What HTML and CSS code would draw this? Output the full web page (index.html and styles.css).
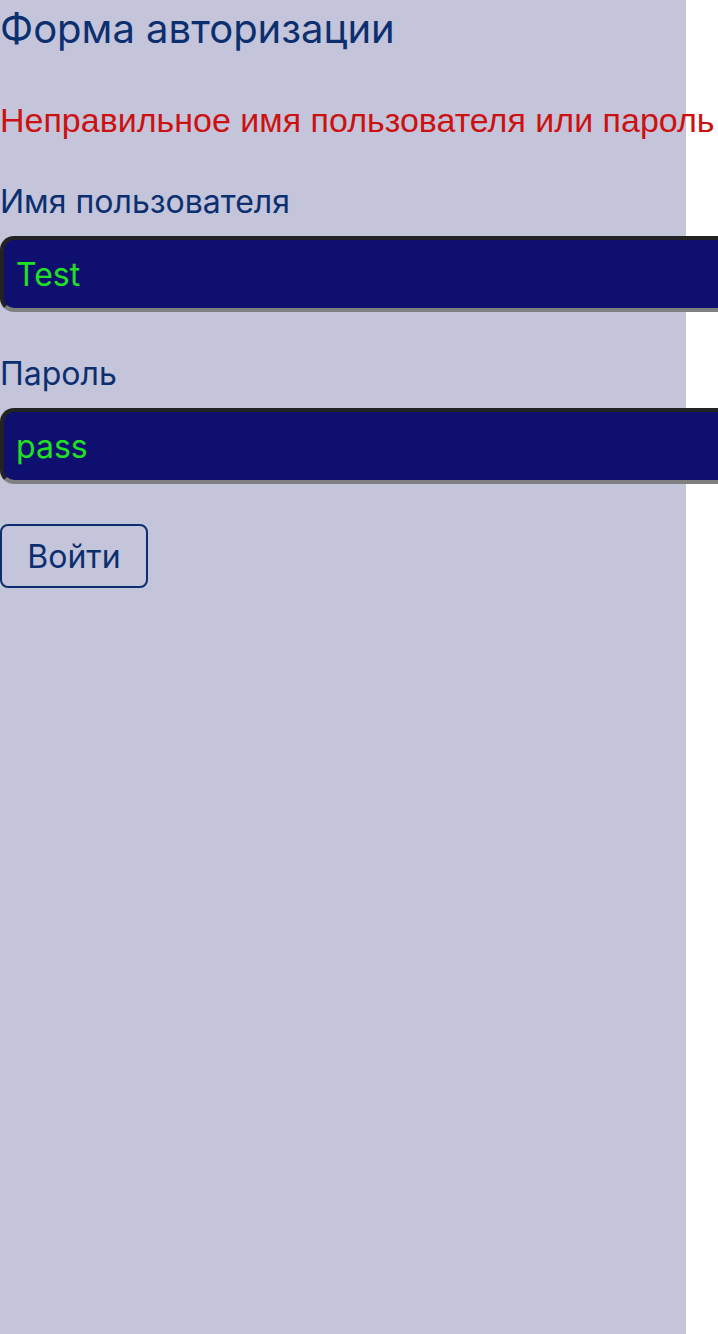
FILE: index.html
```html
<!DOCTYPE html>
<html lang="ru">
<head>
<meta charset="utf-8">
<title>Форма авторизации</title>
<link rel="stylesheet" href="styles.css">
</head>
<body>
<div class="page">
  <h1 class="title">Форма авторизации</h1>
  <p class="error">Неправильное имя пользователя или пароль</p>
  <form class="form">
    <label class="field">
      <span class="label">Имя пользователя</span>
      <input class="input" type="text" value="Test">
    </label>
    <label class="field">
      <span class="label">Пароль</span>
      <input class="input" type="text" value="pass">
    </label>
    <button class="btn" type="button">Войти</button>
  </form>
</div>
</body>
</html>
```
FILE: styles.css
```css
html, body {
  margin: 0;
  padding: 0;
  background: #ffffff;
  overflow: hidden;
}
.page {
  width: 686px;
  min-height: 1334px;
  background: #c4c4da;
  font-family: Inter, "Noto Sans", sans-serif;
  color: #0b2f6f;
}
.title {
  margin: 0;
  font-size: 40px;
  font-weight: 400;
  line-height: 58px;
}
.error {
  margin: 42px 0 0;
  font-family: "Liberation Sans", Arial, sans-serif;
  font-size: 34px;
  line-height: 40px;
  color: #cc1111;
  white-space: nowrap;
}
.form {
  display: flex;
  flex-direction: column;
  align-items: flex-start;
  gap: 40px;
  margin-top: 42px;
}
.field {
  display: flex;
  flex-direction: column;
  gap: 14px;
}
.field:first-child {
  margin-bottom: 2px;
}
.label {
  font-size: 32px;
  line-height: 40px;
}
.input {
  box-sizing: border-box;
  width: 740px;
  height: 76px;
  margin: 0;
  padding: 0 12px;
  border-width: 4px;
  border-style: solid;
  border-color: #222222 #808080 #808080 #222222;
  border-radius: 14px;
  background: #0f0f70;
  color: #22e022;
  font-family: Inter, "Noto Sans", sans-serif;
  font-size: 32px;
  outline: none;
}
.btn {
  box-sizing: border-box;
  width: 148px;
  height: 64px;
  padding: 0;
  border: 2px solid #0b2f6f;
  border-radius: 8px;
  background: transparent;
  color: #0b2f6f;
  font-family: Inter, "Noto Sans", sans-serif;
  font-size: 32px;
}
```
